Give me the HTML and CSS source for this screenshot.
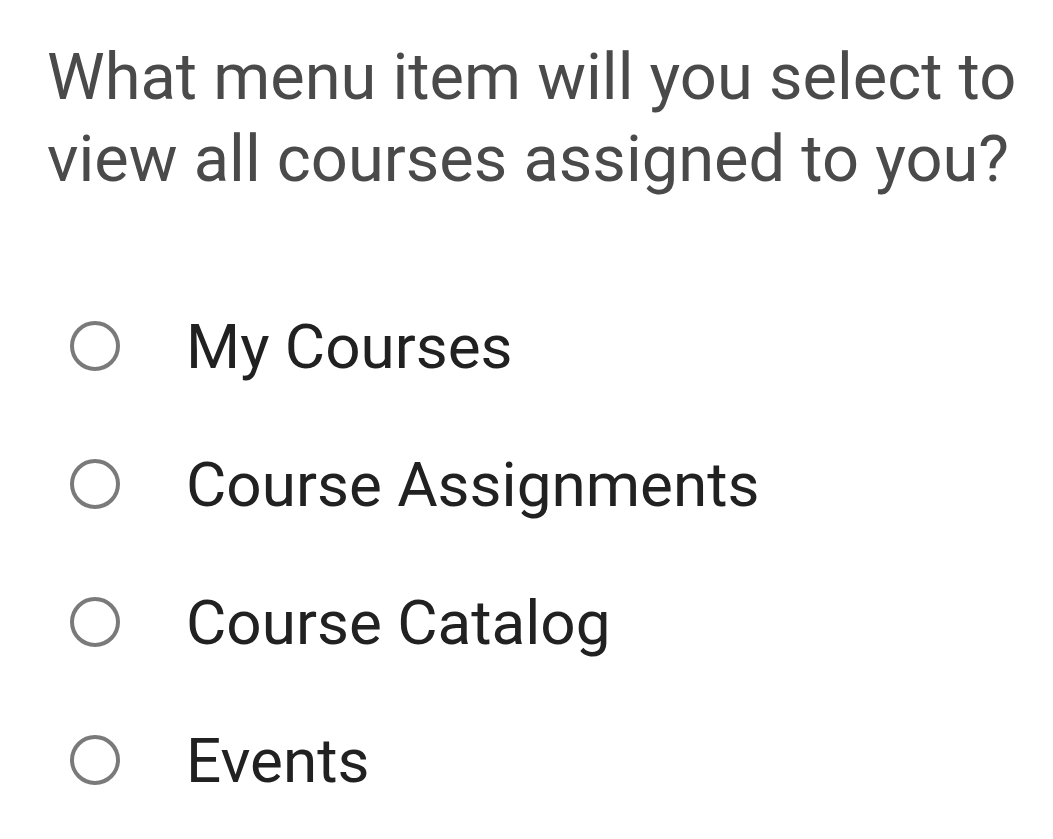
FILE: index.html
```html
<!DOCTYPE html>
<html lang="en">

<head>
  <meta charset="UTF-8">
  <meta name="viewport" content="width=device-width, initial-scale=1.0">
  <title>Quiz question</title>
  <link rel="stylesheet" href="styles.css">
</head>

<body>
  <div class="question">What menu item will you select to view all courses assigned to you?</div>
  <div class="options">
    <label class="option"><span class="radio"></span><span class="label">My Courses</span></label>
    <label class="option"><span class="radio"></span><span class="label">Course Assignments</span></label>
    <label class="option"><span class="radio"></span><span class="label">Course Catalog</span></label>
    <label class="option"><span class="radio"></span><span class="label">Events</span></label>
  </div>
</body>

</html>
```

FILE: styles.css
```css
body {
  margin: 0;
  background: #fff;
  font-family: Roboto, "Liberation Sans", sans-serif;
}

.question {
  color: #4a4a4a;
  font-size: 65px;
  line-height: 82px;
  padding: 36px 0 0 47px;
}

.options {
  display: flex;
  flex-direction: column;
  padding: 77px 0 0 70px;
}

.option {
  display: flex;
  align-items: center;
  height: 138px;
}

.radio {
  width: 42px;
  height: 42px;
  border: 4.5px solid #7a7a7a;
  border-radius: 50%;
  flex-shrink: 0;
}

.label {
  color: #212121;
  font-size: 62px;
  margin-left: 66px;
}
```
